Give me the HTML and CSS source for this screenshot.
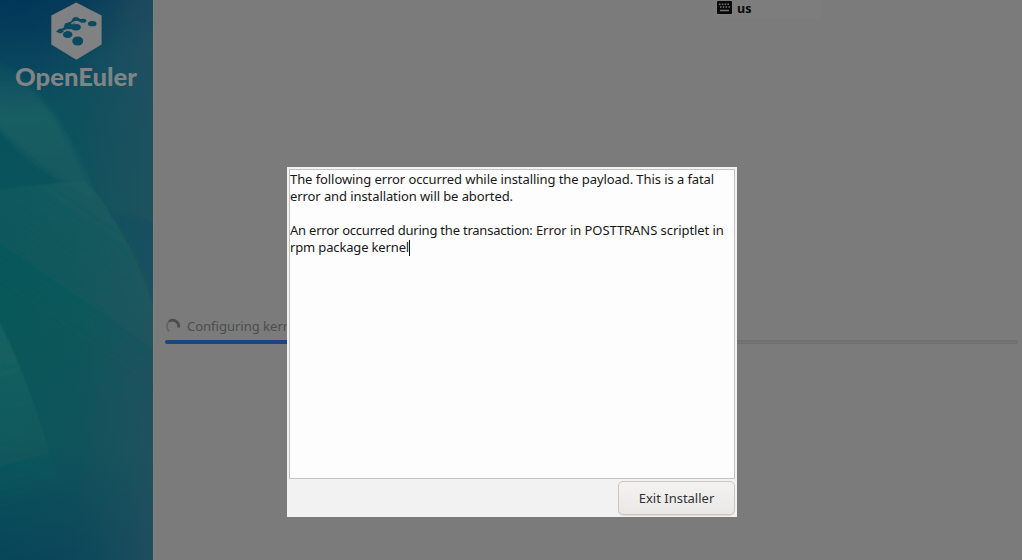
FILE: index.html
```html
<!DOCTYPE html>
<html lang="en">
<head>
<meta charset="utf-8">
<title>openEuler installer</title>
<link rel="stylesheet" href="styles.css">
</head>
<body>
<div class="installer">
  <aside class="sidebar">
    <svg class="backdrop" viewBox="0 0 153 560" preserveAspectRatio="none" aria-hidden="true">
      <defs>
        <linearGradient id="sea" x1="0" y1="0" x2="0" y2="1">
          <stop offset="0" stop-color="#053b5a"/><stop offset=".1" stop-color="#0c4d60"/>
          <stop offset=".24" stop-color="#08525d"/><stop offset=".55" stop-color="#085859"/>
          <stop offset=".8" stop-color="#0b545a"/><stop offset="1" stop-color="#07455a"/>
        </linearGradient>
        <linearGradient id="haze"><stop offset="0" stop-color="#26505f" stop-opacity="0"/><stop offset=".5" stop-color="#26505f" stop-opacity=".15"/><stop offset="1" stop-color="#26505f" stop-opacity=".75"/></linearGradient>
        <linearGradient id="band" gradientUnits="userSpaceOnUse" x1="0" y1="55" x2="0" y2="210"><stop offset="0" stop-color="#1d6264" stop-opacity=".3"/><stop offset=".4" stop-color="#1d6264" stop-opacity=".75"/><stop offset="1" stop-color="#1d6062" stop-opacity=".4"/></linearGradient>
        <linearGradient id="slope" gradientUnits="userSpaceOnUse" x1="125" y1="210" x2="50" y2="320"><stop offset="0" stop-color="#1d6062" stop-opacity=".6"/><stop offset="1" stop-color="#1d6062" stop-opacity="0"/></linearGradient>
        <linearGradient id="wave" gradientUnits="userSpaceOnUse" x1="0" y1="340" x2="45" y2="500"><stop offset="0" stop-color="#1d6866" stop-opacity=".6"/><stop offset="1" stop-color="#1d6866" stop-opacity="0"/></linearGradient>
        <radialGradient id="deep" gradientUnits="userSpaceOnUse" cx="20" cy="0" r="110"><stop offset="0" stop-color="#003558" stop-opacity=".75"/><stop offset="1" stop-color="#003558" stop-opacity="0"/></radialGradient>
        <filter id="soft" x="-30%" y="-20%" width="160%" height="140%"><feGaussianBlur stdDeviation="3"/></filter>
        <filter id="edge" x="-10%" y="-10%" width="120%" height="120%"><feGaussianBlur stdDeviation=".8"/></filter>
      </defs>
      <path d="M0 0H153V560H0Z" fill="url(#sea)"/>
      <path d="M0 0H153V560H0Z" fill="url(#haze)"/>
      <path filter="url(#soft)" d="M-10 60C30 72 62 122 84 170L96 198C56 182 22 154 -10 120Z" fill="url(#band)"/>
      <path filter="url(#edge)" d="M84 180L100 198C122 230 142 268 153 308V570H-5V190Z" fill="url(#slope)"/>
      <path filter="url(#edge)" d="M108 212L160 222V320C146 272 130 234 108 212Z" fill="#104e62" opacity=".35"/>
      <path filter="url(#edge)" d="M-5 314C18 356 38 410 58 480V570H-5Z" fill="url(#wave)"/>
      <path d="M0 0H153V150H0Z" fill="url(#deep)"/>
    </svg>
    <svg class="logo" width="153" height="96" viewBox="0 0 153 96" role="img" aria-label="OpenEuler">
      <path d="M76.300 2.500L101.600 15.500V44.500L76.300 59.700L51.300 44.500V15.500Z" fill="#808182"/>
      <g fill="#0a4a60">
        <ellipse cx="92.200" cy="23.700" rx="4.300" ry="2.600"/>
        <ellipse cx="77.700" cy="41" rx="5.500" ry="4.500"/>
        <ellipse cx="76" cy="27.300" rx="4.800" ry="3.300"/>
        <ellipse cx="67.700" cy="34.500" rx="4.800" ry="3.600"/>
        <ellipse cx="82.800" cy="20.700" rx="3.600" ry="2"/>
        <path d="M56 31.500L59 29L63.500 28L65 23.500L71 21.500L73 18Q77 15.500 80 19L85 20V22L76 22L72 26L72 29L65 31.500L60 33.500Z"/>
      </g>
      <path d="M71.500 24Q76 19.500 80.500 23.500M63.500 31.500Q68 28 72.500 31.500" fill="none" stroke="#808182" stroke-width="1.700"/>
      <text class="wordmark" x="15" y="86" textLength="122" lengthAdjust="spacingAndGlyphs">OpenEuler</text>
    </svg>
  </aside>
  <main class="content">
    <div class="keyboard">
      <svg width="15" height="13" viewBox="0 0 15 13" aria-hidden="true">
        <rect width="15" height="13" rx="1" fill="#090909"/>
        <path d="M2 3.200H13M3 6H13" stroke="#777" stroke-width="1.500" stroke-dasharray="1.500 1.300"/>
        <path d="M3 9.500H12" stroke="#777" stroke-width="1.500"/>
      </svg>
      <span>us</span>
    </div>
    <div class="progress">
      <div class="status">
        <svg width="16" height="16" viewBox="0 0 16 16" aria-hidden="true">
          <path d="M4.500 13.200A6 6 0 0 1 4 3.500" fill="none" stroke="#656565" stroke-width="2"/>
          <path d="M4 3.500A6 6 0 0 1 13.500 9.500" fill="none" stroke="#4d4d4d" stroke-width="2.800"/>
        </svg>
        <span>Configuring kernel</span>
      </div>
      <div class="track"><div class="bar"></div></div>
    </div>
  </main>
</div>
<section class="dialog" role="dialog">
  <div class="message">
    <p class="l1">The following error occurred while installing the payload. This is a fatal</p>
    <p class="l2">error and installation will be aborted.</p>
    <p class="gap"></p>
    <p class="l3"><span class="lead">An error occurred during the transaction:</span> Error in POSTTRANS scriptlet in</p>
    <p class="l4">rpm package kernel<span class="caret"></span></p>
  </div>
  <div class="actions"><button class="exit">Exit Installer</button></div>
</section>
</body>
</html>
```
FILE: styles.css
```css
* { box-sizing: border-box; }
body { margin: 0; font-family: "Noto Sans", "Open Sans", sans-serif; font-size: 13px; }
.installer { display: flex; width: 1022px; height: 560px; overflow: hidden; background: #7b7b7b; }
.sidebar { display: grid; width: 153px; height: 560px; }
.backdrop, .logo { grid-area: 1 / 1; }
.backdrop { width: 153px; height: 560px; }
.wordmark { font-family: Lato, sans-serif; font-size: 25px; font-weight: 900; fill: #808484; }
.content { flex: 1; display: flex; flex-direction: column; border-left: 1px solid #818181; }
.keyboard { display: flex; gap: 5px; width: 109px; height: 19px; margin-left: 559px; padding: 1px 0 0 4px; background: #7d7d7d; font-size: 12.5px; font-weight: 700; line-height: 15px; color: #0c0c0c; }
.progress { margin: 297px 4px 0 11px; }
.status { display: flex; align-items: center; gap: 6px; height: 20px; color: #4c4e4f; white-space: nowrap; }
.track { height: 4px; margin-top: 4px; border: 1px solid #6f6f6f; border-radius: 2px; background: #737373; }
.bar { width: 40%; height: 4px; margin: -1px; border-radius: 2px; background: #1e4480; }
.dialog { position: absolute; left: 287px; top: 167px; display: flex; flex-direction: column; width: 450px; height: 350px; padding: 2px; background: #f3f2f2; }
.message { height: 310px; padding: 1px 0; border: 1px solid #c5c3c2; background: #fdfdfd; color: #181818; }
.message p { width: max-content; height: 17px; margin: 0; line-height: 17px; white-space: nowrap; }
.message .l1 { letter-spacing: -.08px; }
.message .l2 { letter-spacing: -.09px; }
.message .l3 { letter-spacing: -.06px; }
.message .lead { letter-spacing: -.22px; }
.message .l4 { letter-spacing: -.15px; }
.caret { display: inline-block; width: 1px; height: 16px; vertical-align: -4px; background: #111; }
.actions { display: flex; justify-content: flex-end; padding-top: 2px; }
.exit { width: 117px; height: 34px; padding: 0; border: 1px solid #cbc7c4; border-radius: 5px; background: linear-gradient(#f4f3f2, #e9e8e7); box-shadow: 0 1px 1px #dddbd9; font: inherit; color: #303436; }
```
